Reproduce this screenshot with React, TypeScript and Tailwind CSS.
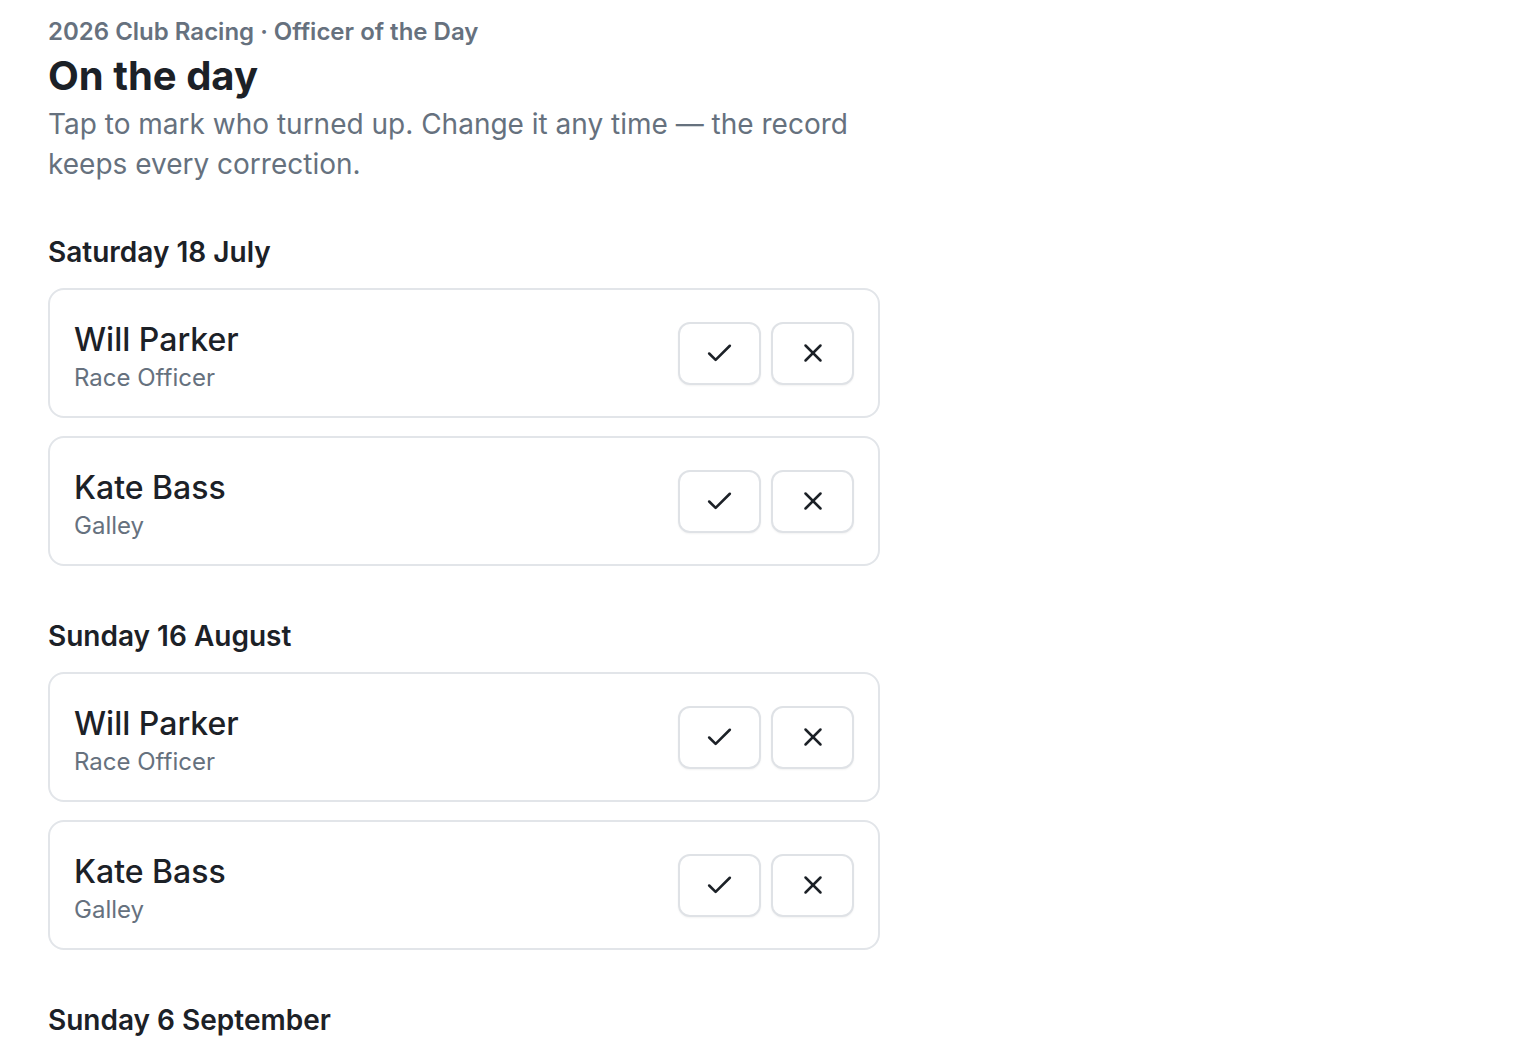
import { Check, X } from "lucide-react";

type Duty = { name: string; role: string };
type RaceDay = { date: string; duties: Duty[] };

const DAYS: RaceDay[] = [
  {
    date: "Saturday 18 July",
    duties: [
      { name: "Will Parker", role: "Race Officer" },
      { name: "Kate Bass", role: "Galley" },
    ],
  },
  {
    date: "Sunday 16 August",
    duties: [
      { name: "Will Parker", role: "Race Officer" },
      { name: "Kate Bass", role: "Galley" },
    ],
  },
  {
    date: "Sunday 6 September",
    duties: [],
  },
];

function DutyCard({ duty }: { duty: Duty }) {
  return (
    <div className="flex h-[130px] items-center justify-between rounded-[16px] border-2 border-[#e2e5e9] bg-white px-[24px]">
      <div className="flex flex-col pt-[8px]">
        <span className="text-[32px] font-medium leading-[40px] text-[#1c2127]">
          {duty.name}
        </span>
        <span className="mt-[2px] text-[24px] leading-[32px] text-[#66717e]">
          {duty.role}
        </span>
      </div>
      <div className="flex items-center gap-[10px]">
        <button className="flex h-[63px] w-[83px] items-center justify-center rounded-[12px] border-2 border-[#dfe2e6] bg-white text-[#1c2127] shadow-[0_1px_2px_rgba(0,0,0,0.05)]">
          <Check size={31} strokeWidth={2} />
        </button>
        <button className="flex h-[63px] w-[83px] items-center justify-center rounded-[12px] border-2 border-[#dfe2e6] bg-white text-[#1c2127] shadow-[0_1px_2px_rgba(0,0,0,0.05)]">
          <X size={30} strokeWidth={2} />
        </button>
      </div>
    </div>
  );
}

export default function App() {
  return (
    <div className="min-h-screen bg-white px-[48px] pt-[16px] font-['Inter',sans-serif]">
      <div className="w-[832px]">
        <p className="text-[24px] font-semibold leading-[32px] text-[#66717e]">
          2026 Club Racing · Officer of the Day
        </p>
        <h1 className="mt-[4px] text-[40px] font-bold leading-[48px] text-[#1c2127]">
          On the day
        </h1>
        <p className="mt-[4px] max-w-[810px] text-[28px] leading-[40px] text-[#66717e]">
          Tap to mark who turned up. Change it any time — the record keeps every
          correction.
        </p>

        <div className="mt-[52px] flex flex-col gap-[54px] pb-[48px]">
          {DAYS.map((day) => (
            <section key={day.date}>
              <h2 className="text-[28px] font-semibold leading-[32px] text-[#1c2127]">
                {day.date}
              </h2>
              {day.duties.length > 0 && (
                <div className="mt-[20px] flex flex-col gap-[18px]">
                  {day.duties.map((duty, i) => (
                    <DutyCard key={i} duty={duty} />
                  ))}
                </div>
              )}
            </section>
          ))}
        </div>
      </div>
    </div>
  );
}
